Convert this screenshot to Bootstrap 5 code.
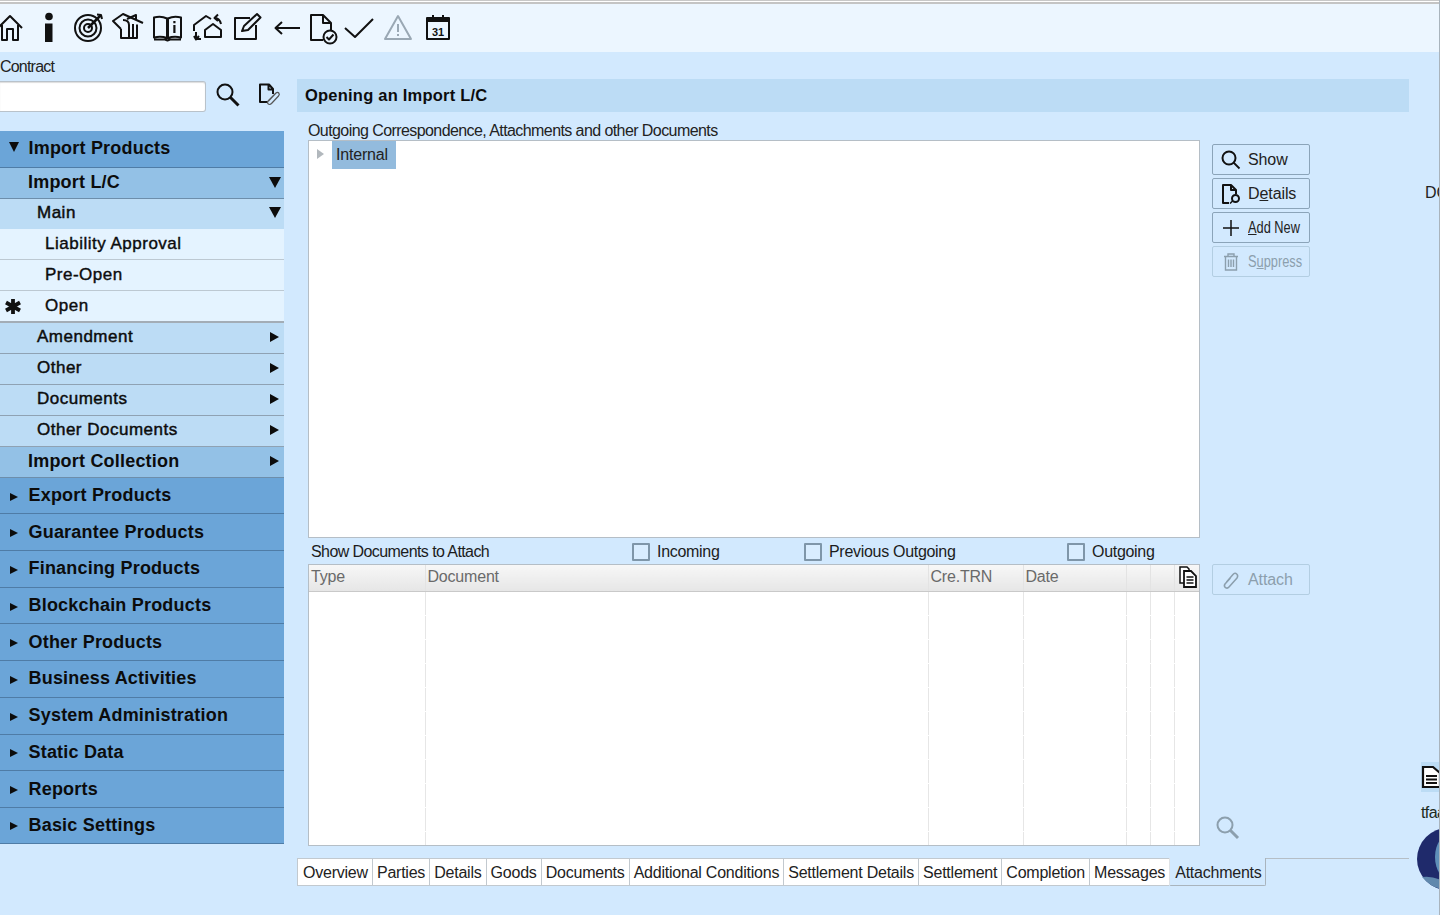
<!DOCTYPE html>
<html lang="en">
<head>
<meta charset="utf-8">
<title>Opening an Import L/C</title>
<link href="https://cdn.jsdelivr.net/npm/bootstrap@5.3.0/dist/css/bootstrap.min.css" rel="stylesheet">
<style>
html,body{height:100%;}
body{width:1440px;height:915px;overflow:hidden;background:#d2e9fe;font-family:"Liberation Sans",Arial,sans-serif;font-size:16px;color:#1c1c1c;}
.page-frame{height:915px;display:flex;flex-direction:column;border-right:1px solid #a9b4bd;}
.top-strip{height:4px;background:#fff;border-top:1px solid #c8c8c8;border-bottom:2px solid #c4c4c4;flex:none;}
.tool-strip{height:48px;background:#ecf6ff;flex:none;overflow:hidden;}
.tool-strip svg{width:30px;height:30px;flex:none;margin-right:9.5px;overflow:visible;}
.tool-strip .first-tool{margin-left:-5px;}
.tool-strip .pull-a{margin-left:-3.5px;margin-right:6px;}
.tool-strip .pull-b{margin-right:9.5px;}
.ink{fill:none;stroke:#111;stroke-width:2;stroke-linejoin:round;}
.workspace{flex:1;min-height:0;}
.left-col{width:297px;flex:none;}
.label-tight{letter-spacing:-.58px;line-height:18px;}
.contract-label{padding-top:6px;height:29px;line-height:18px;color:#222;letter-spacing:-.8px;}
.contract-input{width:206px;height:31px;background:#fff;border:1px solid #b9c2ca;border-left:0;border-radius:0 3px 3px 0;box-shadow:inset 0 1px 1px #ddd;}
.search-ico{width:26px;height:26px;margin:0 0 3px 9px;}
.attach-ico{width:24px;height:24px;margin:0 0 3px 17px;}
.side-menu{margin-top:19px;width:284px;}
.side-row{display:flex;align-items:center;position:relative;font-weight:700;letter-spacing:.2px;color:#0c0c0c;border-bottom:1.5px solid #7c98b2;}
.lvl-a{height:36.7px;background:#6ba5d8;padding-left:28.5px;font-size:18px;border-bottom-color:#4f7ca6;}
.lvl-a.tall-a{height:36px;}
.lvl-b{height:31px;background:#93c1e6;padding-left:28px;font-size:18px;border-bottom-color:#6d8eab;}
.lvl-c{height:31px;background:#bcdcf5;padding:0 0 2px 37px;font-size:17px;font-weight:400;letter-spacing:.5px;-webkit-text-stroke:.45px #0c0c0c;border-bottom-color:#8fa2b3;}
.lvl-c.short-c{height:30px;border-bottom:0;}
.lvl-d{height:31px;background:#e4f3ff;padding-left:45px;font-size:17px;font-weight:400;letter-spacing:.5px;-webkit-text-stroke:.4px #0c0c0c;border-bottom-color:#bcc8d2;}
.lvl-d.last-d{border-bottom:2px solid #a3adb6;height:32px;}
.caret-down{position:absolute;right:3px;top:50%;margin-top:-6px;border-left:6.5px solid transparent;border-right:6.5px solid transparent;border-top:11px solid #0c0c0c;}
.short-c .caret-down{margin-top:-7px;}
.caret-down.at-left{right:auto;left:9px;border-left-width:5.5px;border-right-width:5.5px;border-top-width:10px;margin-top:-7px;}
.caret-right{position:absolute;right:5px;top:50%;margin-top:-6px;border-top:5px solid transparent;border-bottom:5px solid transparent;border-left:9px solid #0c0c0c;}
.caret-right.at-left{right:auto;left:10px;border-top-width:4.5px;border-bottom-width:4.5px;border-left-width:8px;margin-top:-3px;}
.star-mark{position:absolute;left:4px;top:7px;width:18px;height:17px;}
.main-col{width:1112px;flex:none;}
.title-bar{margin-top:27px;height:33px;background:#bcdcf5;padding-left:8px;font-weight:700;font-size:16.5px;letter-spacing:.22px;color:#0c0c0c;display:flex;align-items:center;}
.main-grid{display:grid;grid-template-columns:892px 98px;column-gap:12px;margin-left:11px;}
.cap-line{height:28px;padding-top:10px;color:#222;grid-column:1 / 3;}
.tree-box{height:398px;background:#fff;border:1px solid #b5bec6;padding-left:8px;display:flex;align-items:flex-start;}
.tree-arrow{margin-top:8px;border-top:5.5px solid transparent;border-bottom:5.5px solid transparent;border-left:7px solid #b2b8bd;}
.tree-pick{margin-left:8px;height:28px;padding:0 8px 0 4px;background:#93bbdd;display:flex;align-items:center;color:#222;letter-spacing:-.2px;}
.side-btns{padding-top:4px;display:flex;flex-direction:column;gap:3px;}
.act-btn{width:98px;height:31px;padding:0 0 0 8px;display:flex;align-items:center;gap:7px;background:transparent;border:1.5px solid #8ba4b9;border-radius:2px;color:#222;font-size:16px;line-height:1;letter-spacing:-.1px;--bs-btn-hover-bg:transparent;}
.act-btn svg{width:20px;height:20px;flex:none;}
.act-btn.slim-text span{display:inline-block;transform:scaleX(.8);transform-origin:left center;letter-spacing:0;white-space:nowrap;}
.act-btn.off{border-color:#b3cee2;color:#8c9fad;opacity:1;}
.attach-row{height:26px;padding:2px 0 0 3px;display:flex;align-items:center;grid-column:1 / 3;}
.attach-row .cap-text{width:321px;}
.form-check-input.tick-box{width:18px;height:18px;margin:0 7px 0 0;background-color:#d9edff;border:2px solid #7f96a9;border-radius:1px;flex:none;}
.tick-a,.tick-b,.tick-c{letter-spacing:-.3px;}
.tick-a{width:147px;}
.tick-b{width:238px;}
.grid-box{height:282px;background:#fff;border:1px solid #b5bec6;overflow:hidden;}
.doc-table{table-layout:fixed;width:100%;margin:0;border-collapse:collapse;}
.doc-table th{height:26px;padding:0 0 2px 2px;font-weight:400;color:#6a6a6a;background:linear-gradient(#f7f7f7,#e6e6e6);border-right:1px solid #e3e3e3;border-bottom:1px solid #c9c9c9;border-top:0;border-left:0;vertical-align:middle;letter-spacing:-.2px;}
.doc-table td{height:24px;padding:0;border-right:1px solid #e6e6e6;border-bottom:1px solid #fff;border-top:0;border-left:0;}
.doc-table th:last-child,.doc-table td:last-child{border-right:0;}
.copy-ico{width:20px;height:22px;display:block;margin-left:1px;}
.tab-strip{display:flex;margin-top:11.5px;--bs-nav-tabs-border-width:0;border:0;height:28px;}
.tab-strip .nav-link{height:28px;padding:0 4.05px;background:#fff;color:#222;border:1px solid #c2c9cf;border-right:0;border-radius:0;font-size:16px;letter-spacing:-.23px;line-height:27px;white-space:nowrap;}
.tab-strip .nav-item:first-child .nav-link{padding-left:5px;}
.tab-strip .nav-link.active{background:#d2e9fe;color:#222;border-top:0;border-right:1px solid #a9b4bd;border-bottom:1px solid #a9b4bd;border-radius:0 0 2px 2px;padding:1px 3.5px 0 5px;margin-top:0;}
.tab-rest{flex:1;border-top:1px solid #b5bec6;height:1px;}
.right-col{flex:1;min-width:0;overflow:hidden;position:relative;color:#1c2c22;}
.mag-low{position:absolute;left:1215px;top:815px;width:26px;height:26px;}
.edge-dc{margin:131px 0 0 16px;white-space:nowrap;line-height:20px;color:#222;}
.edge-doc{margin:559px 0 0 12px;height:30px;width:40px;background:#bcdcf5;padding:3px 0 0 0;overflow:hidden;}
.edge-doc svg{width:22px;height:24px;display:block;}
.edge-user{margin:11px 0 0 12px;white-space:nowrap;line-height:20px;letter-spacing:-.6px;}
.edge-orb{display:block;margin:4px 0 0 7px;width:64px;height:64px;}
</style>
</head>
<body>
<div class="page-frame">
  <div class="top-strip"></div>
  <div class="tool-strip d-flex align-items-center">
    <svg class="first-tool" viewBox="0 0 30 30"><path class="ink" d="M3 15 15 3 27 15M7 12V27H12V16H18V27H23V12"/></svg>
    <svg viewBox="0 0 30 30"><circle cx="14" cy="3.500" r="3.800" fill="#111"/><path fill="#111" d="M10 10.500h7.500V29H10z"/></svg>
    <svg viewBox="0 0 30 30"><circle class="ink" cx="14" cy="15" r="13"/><circle class="ink" cx="14" cy="15" r="8.500"/><circle class="ink" cx="14" cy="15" r="4"/><path d="M14 15 27 2" stroke="#111" stroke-width="2.500"/><path d="M23 1.500 27 2 28 6" class="ink"/></svg>
    <svg viewBox="0 0 30 30"><path class="ink" d="M7 16V25H23V11.500M7 16 -1 8 9 1 29 10"/><path class="ink" stroke-width="1.800" d="M9 7C13 7 15 9 15 12V25M19 25V11M13 6 22 2V6"/></svg>
    <svg viewBox="0 0 30 30"><path class="ink" d="M1 4.500C5 3.500 10 3.500 14 5.500V25C10 23.500 5 23.500 1 24.500ZM28 4.500C24 3.500 19 3.500 15 5.500V25C19 23.500 24 23.500 28 24.500ZM1 26.500H12L14.500 27.500 17 26.500H28"/><path d="M20.300 8h2.200V10.200h-2.200ZM20.300 12h2.200v8h-2.200Z" fill="#111"/></svg>
    <svg viewBox="0 0 30 30"><path class="ink" stroke-width="1.800" d="M12 24V17L20 11 28 17V24ZM1 18V12L13 3 18 6M28 11C27 7 25 5 22 5M25 1.500 21.500 5 25 8M3 19V26C5 26 7 26 8 26M1 23 3 26.500 6 23"/></svg>
    <svg viewBox="0 0 30 30"><path class="ink" d="M18 5H3V26H24V12M10 18 12 13 25 1 28.500 4.500 16 17Z"/></svg>
    <svg viewBox="0 0 30 30"><path class="ink" d="M4 15H28M10 9 3.500 15 10 21"/></svg>
    <svg class="pull-a" viewBox="0 0 30 30"><path class="ink" d="M15 27H3V2H15L23 10V18M15 2V10H23"/><circle cx="22" cy="24" r="6.500" fill="#ecf6ff" stroke="#111" stroke-width="2"/><path class="ink" d="M18.500 24 21 26.500 25.500 21.500"/></svg>
    <svg viewBox="0 0 30 30"><path class="ink" d="M1 15 11 24 29 6"/></svg>
    <svg class="pull-b" viewBox="0 0 30 30"><path fill="none" stroke="#9aa8b4" stroke-width="2" stroke-linejoin="round" d="M15 3 28 26H2Z"/><path d="M14 11h2v8h-2ZM14 21h2v2h-2Z" fill="#9aa8b4"/></svg>
    <svg viewBox="0 0 30 30"><path class="ink" d="M4 5H26V26H4Z"/><path d="M4 5H26V9H4ZM9 2h2V6H9ZM19 2h2V6h-2Z" fill="#111"/><text x="15" y="22.500" text-anchor="middle" font-size="11" font-weight="700" font-family="Liberation Sans" fill="#111">31</text></svg>
  </div>

  <div class="workspace d-flex">
    <aside class="left-col">
      <div class="contract-label">Contract</div>
      <div class="d-flex align-items-center">
        <div class="contract-input"></div>
        <svg class="search-ico" viewBox="0 0 26 26"><circle class="ink" stroke-width="2.300" cx="10" cy="10" r="7.500"/><path d="M15.500 15.500 23.500 23.500" stroke="#111" stroke-width="3"/></svg>
        <svg class="attach-ico" viewBox="0 0 24 24"><path class="ink" stroke-width="1.500" d="M10 19H2V1.500H11L15 6V11M10.500 2V6.500H15"/><path fill="none" stroke="#555" stroke-width="1.200" d="M10.500 18 18 10C20 8 22.500 11 20.500 13L13.500 20.500C11 23 8 20 10.500 17.500L17 11"/></svg>
      </div>
      <nav class="side-menu">
        <div class="side-row lvl-a"><span class="caret-down at-left"></span>Import Products</div>
        <div class="side-row lvl-b">Import L/C<span class="caret-down"></span></div>
        <div class="side-row lvl-c short-c">Main<span class="caret-down"></span></div>
        <div class="side-row lvl-d">Liability Approval</div>
        <div class="side-row lvl-d">Pre-Open</div>
        <div class="side-row lvl-d last-d"><svg class="star-mark" viewBox="0 0 18 17"><path d="M9 1V16M2 4.500 16 12.500M16 4.500 2 12.500" stroke="#111" stroke-width="3.800"/></svg>Open</div>
        <div class="side-row lvl-c">Amendment<span class="caret-right"></span></div>
        <div class="side-row lvl-c">Other<span class="caret-right"></span></div>
        <div class="side-row lvl-c">Documents<span class="caret-right"></span></div>
        <div class="side-row lvl-c">Other Documents<span class="caret-right"></span></div>
        <div class="side-row lvl-b">Import Collection<span class="caret-right"></span></div>
        <div class="side-row lvl-a"><span class="caret-right at-left"></span>Export Products</div>
        <div class="side-row lvl-a"><span class="caret-right at-left"></span>Guarantee Products</div>
        <div class="side-row lvl-a"><span class="caret-right at-left"></span>Financing Products</div>
        <div class="side-row lvl-a"><span class="caret-right at-left"></span>Blockchain Products</div>
        <div class="side-row lvl-a"><span class="caret-right at-left"></span>Other Products</div>
        <div class="side-row lvl-a"><span class="caret-right at-left"></span>Business Activities</div>
        <div class="side-row lvl-a"><span class="caret-right at-left"></span>System Administration</div>
        <div class="side-row lvl-a"><span class="caret-right at-left"></span>Static Data</div>
        <div class="side-row lvl-a"><span class="caret-right at-left"></span>Reports</div>
        <div class="side-row lvl-a tall-a"><span class="caret-right at-left"></span>Basic Settings</div>
      </nav>
    </aside>

    <main class="main-col">
      <div class="title-bar">Opening an Import L/C</div>
      <div class="main-grid">
        <div class="cap-line label-tight">Outgoing Correspondence, Attachments and other Documents</div>
        <div class="tree-box"><span class="tree-arrow"></span><span class="tree-pick">Internal</span></div>
        <div class="side-btns">
          <button type="button" class="btn act-btn"><svg viewBox="0 0 20 20"><circle class="ink" stroke-width="1.600" cx="8" cy="8" r="6.500"/><path d="M12.500 12.500 18.500 18.500" stroke="#111" stroke-width="1.800"/></svg><span>Show</span></button>
          <button type="button" class="btn act-btn"><svg viewBox="0 0 20 20"><path class="ink" stroke-width="1.500" d="M8 19H2V1H10L15 6V10M10 1V6H15"/><circle class="ink" stroke-width="1.500" cx="14.500" cy="14.500" r="3.500"/><path d="M11.500 17 9 19.500" stroke="#111" stroke-width="1.500"/></svg><span>D<u>e</u>tails</span></button>
          <button type="button" class="btn act-btn slim-text"><svg viewBox="0 0 20 20"><path d="M10 2V18M2 10H18" stroke="#111" stroke-width="1.500"/></svg><span><u>A</u>dd New</span></button>
          <button type="button" class="btn act-btn slim-text off"><svg viewBox="0 0 20 20"><path fill="none" stroke="#8c9fad" stroke-width="1.400" d="M3 4.500H17M7 4.500V2H13V4.500M4.500 4.500V18H15.500V4.500M7.500 7.500V15M10 7.500V15M12.500 7.500V15"/></svg><span>S<u>u</u>ppress</span></button>
        </div>
        <div class="attach-row label-tight">
          <span class="cap-text">Show Documents to Attach</span>
          <input class="form-check-input tick-box" type="checkbox" aria-label="Incoming"><span class="tick-a">Incoming</span>
          <input class="form-check-input tick-box" type="checkbox" aria-label="Previous Outgoing"><span class="tick-b">Previous Outgoing</span>
          <input class="form-check-input tick-box" type="checkbox" aria-label="Outgoing"><span class="tick-c">Outgoing</span>
        </div>
        <div class="grid-box">
          <table class="table doc-table">
            <colgroup><col style="width:116px"><col style="width:503px"><col style="width:95px"><col style="width:103px"><col style="width:24px"><col style="width:24px"><col></colgroup>
            <thead><tr><th>Type</th><th>Document</th><th>Cre.TRN</th><th>Date</th><th></th><th></th><th><svg class="copy-ico" viewBox="0 0 20 22"><path fill="#fff" stroke="#111" stroke-width="1.500" d="M2 1H9L11 3V17H2Z"/><path fill="#fff" stroke="#111" stroke-width="1.800" d="M6 5H13L18 10V21H6Z"/><path d="M8.500 11H15.500M8.500 14H15.500M8.500 17H15.500" stroke="#111" stroke-width="1.300"/></svg></th></tr></thead>
            <tbody>
              <tr><td></td><td></td><td></td><td></td><td></td><td></td><td></td></tr>
              <tr><td></td><td></td><td></td><td></td><td></td><td></td><td></td></tr>
              <tr><td></td><td></td><td></td><td></td><td></td><td></td><td></td></tr>
              <tr><td></td><td></td><td></td><td></td><td></td><td></td><td></td></tr>
              <tr><td></td><td></td><td></td><td></td><td></td><td></td><td></td></tr>
              <tr><td></td><td></td><td></td><td></td><td></td><td></td><td></td></tr>
              <tr><td></td><td></td><td></td><td></td><td></td><td></td><td></td></tr>
              <tr><td></td><td></td><td></td><td></td><td></td><td></td><td></td></tr>
              <tr><td></td><td></td><td></td><td></td><td></td><td></td><td></td></tr>
              <tr><td></td><td></td><td></td><td></td><td></td><td></td><td></td></tr>
              <tr><td></td><td></td><td></td><td></td><td></td><td></td><td></td></tr>
            </tbody>
          </table>
        </div>
        <div>
          <button type="button" class="btn act-btn off"><svg viewBox="0 0 20 20"><path fill="none" stroke="#8c9fad" stroke-width="1.500" d="M9.500 8 4 14C2 17 6 19.500 8 17L16 8C18 5 14.500 1.500 12 4.500L5.500 12"/></svg><span>Attach</span></button>
        </div>
      </div>
      <ul class="nav nav-tabs tab-strip">
        <li class="nav-item"><a class="nav-link" href="#">Overview</a></li>
        <li class="nav-item"><a class="nav-link" href="#">Parties</a></li>
        <li class="nav-item"><a class="nav-link" href="#">Details</a></li>
        <li class="nav-item"><a class="nav-link" href="#">Goods</a></li>
        <li class="nav-item"><a class="nav-link" href="#">Documents</a></li>
        <li class="nav-item"><a class="nav-link" href="#">Additional Conditions</a></li>
        <li class="nav-item"><a class="nav-link" href="#">Settlement Details</a></li>
        <li class="nav-item"><a class="nav-link" href="#">Settlement</a></li>
        <li class="nav-item"><a class="nav-link" href="#">Completion</a></li>
        <li class="nav-item"><a class="nav-link" href="#">Messages</a></li>
        <li class="nav-item"><a class="nav-link active" href="#">Attachments</a></li>
        <li class="tab-rest"></li>
      </ul>
    </main>

    <aside class="right-col">
      <div class="edge-dc">DC</div>
      <div class="edge-doc"><svg viewBox="0 0 22 24"><path fill="#fff" stroke="#111" stroke-width="2.200" d="M2 2H12L19 8V22H2Z"/><path d="M5 11H16M5 14.500H16M5 18H16" stroke="#111" stroke-width="1.800"/></svg></div>
      <div class="edge-user">tfaa</div>
      <svg class="edge-orb" viewBox="0 0 64 64"><circle cx="32" cy="32" r="31" fill="#1f2a6b"/><ellipse cx="36" cy="30" rx="17" ry="24" fill="#5f8fb8"/><path d="M6 50Q22 48 34 60 20 66 6 50Z" fill="#6088ad"/></svg>
    </aside>
  </div>
  <svg class="mag-low" viewBox="0 0 26 26"><circle fill="none" stroke="#8c9fad" stroke-width="2" cx="10" cy="10" r="7.500"/><path d="M15.500 15.500 23 23" stroke="#8c9fad" stroke-width="3"/></svg>
</div>
</body>
</html>
